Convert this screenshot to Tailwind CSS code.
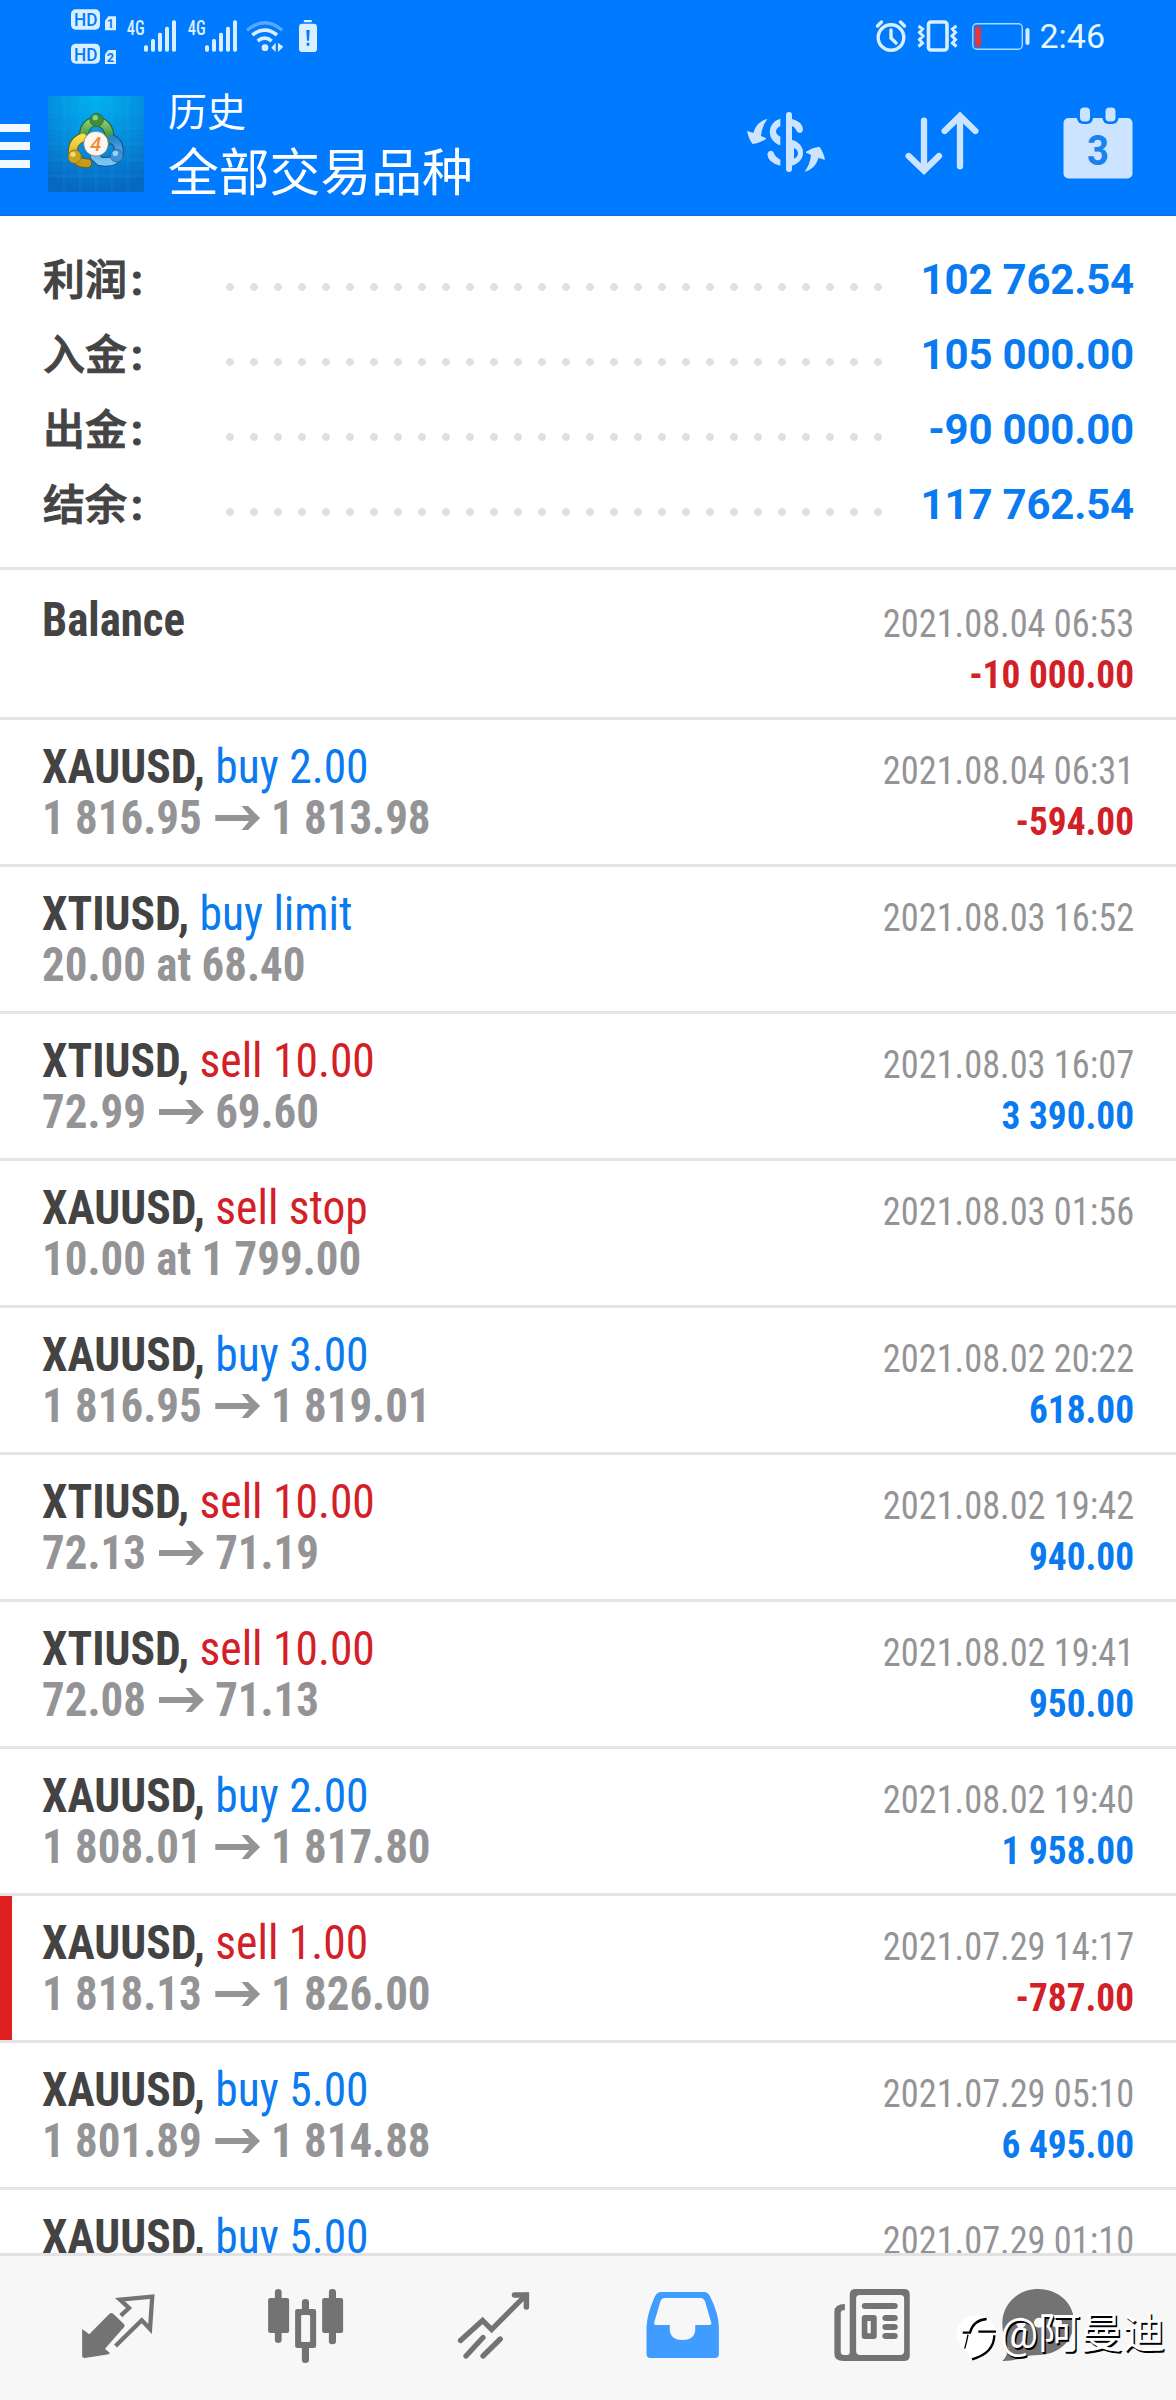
<!DOCTYPE html>
<html lang="zh-CN">
<head>
<meta charset="utf-8">
<title>历史</title>
<script src="https://cdn.jsdelivr.net/npm/@tailwindcss/browser@4"></script>
</head>
<body class="bg-white">
<div class="relative flex h-[2400px] w-[1176px] flex-col overflow-hidden bg-white font-['Roboto','Noto_Sans_CJK_SC',sans-serif]">

  <header class="flex h-[216px] shrink-0 flex-col border-b border-[#1570d2] bg-[#007aff] text-white">
    <!-- status bar -->
    <div class="flex h-[72px] shrink-0 items-center pl-[70px] pr-[71px]">
      <svg class="h-[72px] w-[47px] shrink-0" viewBox="90 0 141 216" fill="#d9efff">
        <rect x="93" y="28" width="87" height="61" rx="14"/><path d="M195 62l10-13h23v42h-33z"/>
        <rect x="93" y="131" width="87" height="60" rx="14"/><path d="M195 163l10-13h23v42h-33z"/>
        <g fill="#007aff" font-family="Roboto" font-weight="500" text-anchor="middle">
          <text x="137" y="79" font-size="57" textLength="70" lengthAdjust="spacingAndGlyphs">HD</text>
          <text x="137" y="182" font-size="57" textLength="70" lengthAdjust="spacingAndGlyphs">HD</text>
          <text x="211" y="84" font-size="36" font-weight="700">1</text>
          <text x="211" y="186" font-size="38" font-weight="700">2</text>
        </g>
      </svg>
      <svg class="ml-[9px] h-[72px] w-[51px] shrink-0" viewBox="258 0 153 216" fill="#d9efff">
        <text x="260" y="104" font-family="Roboto Condensed" font-weight="500" font-size="58" textLength="54" lengthAdjust="spacingAndGlyphs">4G</text>
        <rect x="312" y="136" width="12" height="19" rx="5"/><rect x="333" y="117" width="12" height="38" rx="5"/><rect x="354" y="98" width="12" height="57" rx="5"/><rect x="375" y="80" width="12" height="75" rx="5"/><rect x="396" y="61" width="12" height="94" rx="5"/>
      </svg>
      <svg class="ml-[10px] h-[72px] w-[51px] shrink-0" viewBox="258 0 153 216" fill="#d9efff">
        <text x="260" y="104" font-family="Roboto Condensed" font-weight="500" font-size="58" textLength="54" lengthAdjust="spacingAndGlyphs">4G</text>
        <rect x="312" y="136" width="12" height="19" rx="5"/><rect x="333" y="117" width="12" height="38" rx="5"/><rect x="354" y="98" width="12" height="57" rx="5"/><rect x="375" y="80" width="12" height="75" rx="5"/><rect x="396" y="61" width="12" height="94" rx="5"/>
      </svg>
      <svg class="ml-[8px] h-[72px] w-[38px] shrink-0" viewBox="618 0 114 216" fill="none" stroke="#d9efff" stroke-width="10">
        <path d="M621 91Q674 46 727 91" stroke="#58a9ff"/>
        <path d="M637 105Q674 76 711 105" stroke-width="11"/>
        <path d="M653 123Q674 106 695 123" stroke-width="11"/>
        <circle cx="675" cy="143" r="10" fill="#d9efff" stroke="none"/>
        <path d="M707 128v28l-13-13zM714 128v28l16-16z" fill="#d9efff" stroke="none"/>
      </svg>
      <svg class="ml-[14px] h-[72px] w-[20px] shrink-0" viewBox="774 0 60 216" fill="#d9efff">
        <rect x="791" y="60" width="25" height="7" rx="3"/><rect x="777" y="71" width="54" height="85" rx="10"/>
        <path d="M799 90h10l-2 32h-6zM800 128h8v9h-8z" fill="#007aff"/>
      </svg>
      <span class="grow"></span>
      <svg class="h-[72px] w-[32px] shrink-0" viewBox="876 0 32 72" fill="none" stroke="#d9efff" stroke-width="3.400" stroke-linecap="round">
        <circle cx="892" cy="37.500" r="12.800"/><path d="M892 30v8l5 5M878.500 26l4-4M905.500 26l-4-4"/>
      </svg>
      <svg class="ml-[10px] h-[72px] w-[42px] shrink-0" viewBox="918 0 42 72" fill="none" stroke="#d9efff" stroke-width="3">
        <rect x="929.500" y="22" width="18.500" height="28" rx="2.500" stroke-width="3.600"/>
        <path d="M919.500 26l4 3-3 3.500 3.500 3.500-3.500 3.500 3 3.500-4 3.500M957.500 26l-4 3 3 3.500-3.500 3.500 3.500 3.500-3 3.500 4 3.500"/>
      </svg>
      <svg class="ml-[13px] h-[72px] w-[58px] shrink-0" viewBox="973 0 58 72">
        <rect x="973.800" y="23.800" width="49.500" height="25.500" rx="4" fill="none" stroke="#a4dcff" stroke-width="1.400"/>
        <rect x="976" y="26.500" width="6" height="20.500" rx="2" fill="#e8343c"/><rect x="1026.500" y="28" width="4" height="17" rx="2" fill="#d9efff"/>
      </svg>
      <span class="ml-[9px] text-[34px] leading-[74px] text-[#e6f6ff]">2:46</span>
    </div>

    <!-- toolbar -->
    <div class="flex h-[143px]">
      <div class="flex flex-col gap-[10px] pt-[52px]">
        <i class="block h-2 w-[30px] bg-[#f2f8ff]"></i><i class="block h-2 w-[30px] bg-[#f2f8ff]"></i><i class="block h-2 w-[30px] bg-[#f2f8ff]"></i>
      </div>
      <svg class="ml-[18px] mt-6 size-24 shrink-0" viewBox="24 288 288 288">
        <defs>
          <radialGradient id="bg" cx=".5" cy="0" r="1"><stop offset="0" stop-color="#00b4f0"/><stop offset=".45" stop-color="#0492e0"/><stop offset="1" stop-color="#0668c2"/></radialGradient>
          <linearGradient id="gr" x1="0" y1="0" x2="0" y2="1"><stop offset="0" stop-color="#8fc96e"/><stop offset="1" stop-color="#2c8a35"/></linearGradient>
          <linearGradient id="ye" x1="0" y1="0" x2="0" y2="1"><stop offset="0" stop-color="#f6e04c"/><stop offset="1" stop-color="#c49a17"/></linearGradient>
          <linearGradient id="bl" x1="0" y1="0" x2="0" y2="1"><stop offset="0" stop-color="#2a86cf"/><stop offset="1" stop-color="#7cc4f2"/></linearGradient>
        </defs>
        <path fill="url(#bg)" d="M24 288h288v288H24z"/>
        <path d="M72 288v288M120 288v288M168 288v288M216 288v288M264 288v288M24 336h288M24 384h288M24 432h288M24 480h288M24 528h288" stroke="#5cc8ff" stroke-opacity=".2" stroke-width="2"/>
        <g stroke-linecap="round" fill="none">
          <path d="M132 398Q138 368 168 364Q202 368 208 402V420" stroke="#1f5f32" stroke-width="29"/>
          <path d="M128 412Q96 424 98 462Q108 490 142 490" stroke="#6e5c12" stroke-width="29"/>
          <path d="M216 418Q240 428 236 464Q222 492 180 484L164 470" stroke="#1b4f86" stroke-width="29"/>
          <path d="M132 398Q138 368 168 364Q202 368 208 402V420" stroke="url(#gr)" stroke-width="23"/>
          <path d="M128 412Q96 424 98 462Q108 490 142 490" stroke="url(#ye)" stroke-width="23"/>
          <path d="M216 418Q240 428 236 464Q222 492 180 484L164 470" stroke="url(#bl)" stroke-width="23"/>
        </g>
        <circle cx="170" cy="360" r="20" fill="#3d8f3c" stroke="#22612c" stroke-width="2"/><circle cx="166" cy="353" r="8" fill="#8fce80"/>
        <circle cx="104" cy="470" r="20" fill="#c6a322" stroke="#7b6514" stroke-width="2"/><circle cx="99" cy="463" r="8" fill="#f1dd6e"/>
        <circle cx="230" cy="467" r="19" fill="#3f92d6" stroke="#1c5c99" stroke-width="2"/><circle cx="226" cy="460" r="8" fill="#9bd4f8"/>
        <circle cx="168" cy="431" r="37" fill="#fbf7f4" stroke="#7f6a50" stroke-width="2"/>
        <text x="167" y="452" text-anchor="middle" font-family="Roboto" font-weight="500" font-style="italic" font-size="60" fill="#f58a2e">4</text>
      </svg>
      <div class="ml-6 flex flex-col whitespace-nowrap">
        <span class="mt-[13px] text-[39px] leading-[56px]">历史</span>
        <span class="text-[50.800px] leading-[66px]">全部交易品种</span>
      </div>
      <span class="grow"></span>
      <svg class="h-[144px] w-[84px] shrink-0" viewBox="744 72 84 144">
        <g transform="translate(730 100) scale(.33333)" fill="#cce4ff">
          <rect x="168" y="36" width="18" height="180" rx="9"/>
          <path d="M151 56C109 68 109 122 151 136V110C134 103 134 86 151 79Z"/>
          <path d="M122 152q9 1 11 11q5 11 18 16V197Q113 188 112 162Q114 153 122 152Z"/>
          <path d="M184 56Q217 64 219 88Q218 99 209 99Q201 98 198 89Q195 80 184 77Z"/>
          <path fill-rule="evenodd" d="M184 119C231 130 231 186 184 197ZM192 144C208 150 208 170 192 176Z"/>
          <path id="turn" d="M112 57C90 62 76 78 71 98Q60 97 52 92V98Q58 120 68 132Q88 130 108 117V114Q100 112 93 107Q96 78 112 57Z"/>
          <use href="#turn" transform="translate(336 272) rotate(180)"/>
        </g>
      </svg>
      <svg class="ml-[72px] h-[144px] w-[84px] shrink-0" viewBox="900 72 84 144">
        <g transform="translate(730 100) scale(.33333)" fill="none" stroke="#cce4ff" stroke-width="19" stroke-linecap="round">
          <path d="M582 62V208M536 168L582 212L627 168M690 199V50M644 93L690 48L736 93"/>
        </g>
      </svg>
      <svg class="ml-[76px] mr-[40px] h-[144px] w-[76px] shrink-0" viewBox="1060 72 76 144">
        <rect x="1063.500" y="118" width="69" height="60.500" rx="5" fill="#cce4ff"/>
        <rect x="1077" y="104" width="16" height="20" rx="6" fill="#007aff"/><rect x="1102.500" y="104" width="16" height="20" rx="6" fill="#007aff"/>
        <rect x="1080" y="107.500" width="10" height="14" rx="4" fill="#cce4ff"/><rect x="1105.500" y="107.500" width="10" height="14" rx="4" fill="#cce4ff"/>
        <text x="1098" y="165" text-anchor="middle" font-family="Roboto" font-weight="700" font-size="42" textLength="22" lengthAdjust="spacingAndGlyphs" fill="#1a82ee">3</text>
      </svg>
    </div>
  </header>

  <!-- account summary -->
  <section id="summary" class="flex h-[354px] shrink-0 flex-col border-b-[3px] border-[#e5e5e5] px-[42px] pt-[26px] text-[42px] font-bold"></section>

  <!-- deals -->
  <main id="deals" class="flex h-[1683px] shrink-0 flex-col overflow-hidden pt-[3px]"></main>

  <!-- tab bar -->
  <nav class="flex h-[147px] shrink-0 border-t-[3px] border-[#e2e2e2] bg-[#f7f7f7] px-6">
    <svg class="h-36 w-[188px]" viewBox="24 2256 188 144">
      <g transform="translate(0 2180) scale(.375 .33333)" fill="#737373">
        <path d="M219 447L238 463L292 401Q297 397 302 401L331 433Q334 437 331 441L280 506L293 519L290 523L226 534Q219 534 219 528Z"/>
        <path d="M322 407L344 384L320 359L406 350L400 447L378 421L308 498" fill="none" stroke="#737373" stroke-width="4.300" vector-effect="non-scaling-stroke"/>
      </g>
    </svg>
    <svg class="h-36 w-[188px]" viewBox="212 2256 188 144">
      <g transform="translate(0 2180) scale(.375 .33333)" fill="#737373">
        <rect x="715" y="354" width="56" height="105" rx="6"/><rect x="733" y="327" width="18" height="162" rx="9"/>
        <path fill-rule="evenodd" d="M793 387H837Q843 387 843 393V498Q843 504 837 504H793Q787 504 787 498V393Q787 387 793 387ZM807 405Q803 405 803 409V482Q803 486 807 486H823Q827 486 827 482V409Q827 405 823 405Z"/>
        <path d="M805 392V366Q805 357 814.500 357Q824 357 824 366V392ZM805 500V540Q805 549 814.500 549Q824 549 824 540V500Z"/>
        <rect x="859" y="354" width="56" height="105" rx="6"/><rect x="877" y="327" width="19" height="166" rx="9"/>
      </g>
    </svg>
    <svg class="h-36 w-[188px]" viewBox="400 2256 188 144" fill="none" stroke="#737373" stroke-linecap="round">
      <path stroke-width="5.300" d="M460.500 2340.500L482.600 2320.500L491.600 2329.500L526 2295M466 2356L483 2337.500M483 2356L500.300 2339"/>
      <path stroke-width="5.500" d="M514.500 2295H526.400V2307"/>
    </svg>
    <svg class="h-36 w-[188px]" viewBox="588 2256 188 144">
      <g transform="translate(588 2180) scale(.375 .33333)" fill="#409cff">
        <path fill-rule="evenodd" d="M194 336H310Q320 336 326 350Q348 400 349 440V522Q349 534 338 534H167Q156 534 156 522V440Q158 400 178 350Q184 336 194 336ZM204 354Q197 354 193 364L176 430Q175 435 181 435H218V450Q220 480 252 480Q284 480 286 450V435H324Q330 435 329 430L312 364Q308 354 300 354Z"/>
      </g>
    </svg>
    <svg class="h-36 w-[188px]" viewBox="776 2256 188 144">
      <g transform="translate(588 2180) scale(.375 .33333)" fill="#737373">
        <path fill-rule="evenodd" d="M714 327H842Q858 327 858 343V527Q858 543 842 543H681Q657 543 657 521V396Q657 372 685 372V390Q674 390 674 400V516Q674 525 684 525H691Q698 525 698 516V343Q698 327 714 327ZM726 345Q715 345 715 355V514Q715 525 726 525H832Q843 525 843 514V355Q843 345 832 345Z"/>
        <rect x="730" y="369" width="96" height="18" rx="9"/>
        <path fill-rule="evenodd" d="M738 405H762Q770 405 770 413V469Q770 477 762 477H738Q730 477 730 469V413Q730 405 738 405ZM745 423V460H754V423Z"/>
        <rect x="785" y="405" width="41" height="18" rx="9"/><rect x="785" y="432" width="41" height="18" rx="9"/><rect x="785" y="459" width="41" height="18" rx="9"/>
      </g>
    </svg>
    <svg class="h-36 w-[188px]" viewBox="964 2256 188 144">
      <g transform="translate(940 2280) scale(.33333)" fill="#737373">
        <path d="M187 130C187 70 235 27 295 27S402 70 402 126S355 225 295 225Q265 225 245 234Q215 244 187 243Q200 232 206 205Q187 175 187 130"/>
        <g fill="#f7f7f7"><circle cx="243" cy="128" r="15"/><circle cx="297" cy="128" r="15"/><circle cx="351" cy="128" r="15"/></g>
      </g>
    </svg>
  </nav>

  <!-- author watermark -->
  <div class="absolute left-[954px] top-[2308px] flex h-[56px] items-start whitespace-nowrap">
    <svg class="h-[56px] w-[46px]" viewBox="42 84 138 168">
      <path d="M109 105C75 105 50 130 50 163Q51 195 76 212L84 216L94 242Q170 215 168 163C168 130 142 105 109 105Z" fill="#fff"/>
      <path d="M68 158H90Q100 120 140 117M115 155H168M163 166Q162 220 96 238" fill="none" stroke="#000" stroke-width="7"/>
      <path d="M84 164Q80 186 74 206" fill="none" stroke="#000" stroke-width="4"/>
      <path d="M90 162H112L98 218L84 216Z" fill="#fff"/>
    </svg>
    <span class="text-[42.400px] leading-[52px] text-white [text-shadow:1.500px_1.500px_0.500px_#000]">@阿曼迪</span>
  </div>
</div>

<script>
const summary = [['利润', '102 762.54'], ['入金', '105 000.00'], ['出金', '-90 000.00'], ['结余', '117 762.54']];
document.getElementById('summary').innerHTML = summary.map(([label, value]) => `
  <div class="flex h-[75px] items-center leading-[75px]">
    <span class="w-[176px] pl-px pt-px font-medium text-[#444] [-webkit-text-stroke:1px_#444]">${label}<span class="ml-[4px] font-bold">:</span></span>
    <span class="mt-[15px] h-2 w-[672px] bg-[radial-gradient(circle,#e0e0e0_3.500px,transparent_4.200px)] bg-[length:24px_8px]"></span>
    <span class="grow text-right tracking-[-0.2px] text-[#0a7af0]">${value}</span>
  </div>`).join('');

// symbol, side, open price (or order line), close price, time, profit, marked
const deals = [
  ['Balance', '', '', '', '2021.08.04 06:53', '-10 000.00'],
  ['XAUUSD', 'buy 2.00', '1 816.95', '1 813.98', '2021.08.04 06:31', '-594.00'],
  ['XTIUSD', 'buy limit', '20.00 at 68.40', '', '2021.08.03 16:52', ''],
  ['XTIUSD', 'sell 10.00', '72.99', '69.60', '2021.08.03 16:07', '3 390.00'],
  ['XAUUSD', 'sell stop', '10.00 at 1 799.00', '', '2021.08.03 01:56', ''],
  ['XAUUSD', 'buy 3.00', '1 816.95', '1 819.01', '2021.08.02 20:22', '618.00'],
  ['XTIUSD', 'sell 10.00', '72.13', '71.19', '2021.08.02 19:42', '940.00'],
  ['XTIUSD', 'sell 10.00', '72.08', '71.13', '2021.08.02 19:41', '950.00'],
  ['XAUUSD', 'buy 2.00', '1 808.01', '1 817.80', '2021.08.02 19:40', '1 958.00'],
  ['XAUUSD', 'sell 1.00', '1 818.13', '1 826.00', '2021.07.29 14:17', '-787.00', true],
  ['XAUUSD', 'buy 5.00', '1 801.89', '1 814.88', '2021.07.29 05:10', '6 495.00'],
  ['XAUUSD', 'buy 5.00', '', '', '2021.07.29 01:10', ''],
];
const arrow = '<svg class="mr-[12px] ml-[14px] inline-block h-6 w-[48px] align-[4px]" viewBox="0 0 45 24" preserveAspectRatio="none" fill="#949496"><path d="M0 9H34L26.500 0H33L45 12L33 24H26.500L34 15H0Z"/></svg>';
document.getElementById('deals').innerHTML = deals.map(([sym, side, from, to, time, profit, marked]) => `
  <div class="relative flex h-[147px] shrink-0 justify-between border-b-[3px] border-[#e5e5e5] px-[42px] font-['Roboto_Condensed',Roboto,sans-serif] leading-[51px] whitespace-nowrap">
    ${marked ? '<i class="absolute top-0 left-0 h-full w-3 bg-[#e02020]"></i>' : ''}
    <div class="pt-[21px] text-[48px]">
      <div class="origin-left ${side ? 'scale-x-[0.948]' : 'scale-x-[0.935]'}"><b class="font-bold text-[#434343]">${sym}${side ? ',' : ''}</b> <span class="${side.startsWith('buy') ? 'text-[#0a7af0]' : 'text-[#d32027]'}">${side}</span></div>
      <div class="origin-left scale-x-[0.936] font-bold text-[#949496]">${from}${to ? arrow + to : ''}</div>
    </div>
    <div class="pt-[25px] text-right text-[39.500px]">
      <div class="origin-right scale-x-[0.920] text-[#949496]">${time}</div>
      <div class="origin-right scale-x-[0.945] font-bold ${profit.startsWith('-') ? 'text-[#d32027]' : 'text-[#0a7af0]'}">${profit}</div>
    </div>
  </div>`).join('');
</script>
</body>
</html>
